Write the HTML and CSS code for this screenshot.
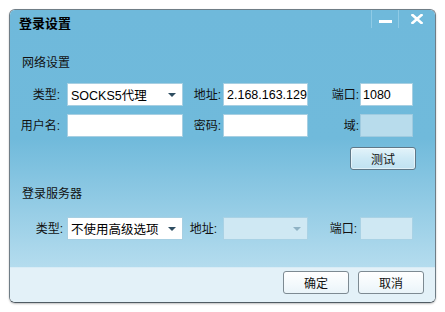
FILE: index.html
```html
<!DOCTYPE html>
<html>
<head>
<meta charset="utf-8">
<link rel="stylesheet" href="styles.css">
</head>
<body>
<div class="window">
  <div class="main">
    <div class="titlebar">
      <div class="title">登录设置</div>
      <div class="ctrls">
        <div class="ctrl min"><span class="dash"></span></div>
        <div class="ctrl close">
          <svg width="12" height="10" viewBox="0 0 12 10"><path d="M1.5 1 L10.5 9 M10.5 1 L1.5 9" stroke="#fff" stroke-width="2.6" stroke-linecap="square"/></svg>
        </div>
      </div>
    </div>

    <div class="section">网络设置</div>
    <div class="grid">
      <div class="lbl l1">类型:</div>
      <div class="field select"><span class="val">SOCKS5代理</span><span class="arrow"></span></div>
      <div class="lbl l2">地址:</div>
      <div class="field"><span class="val">2.168.163.129</span></div>
      <div class="lbl l3">端口:</div>
      <div class="field"><span class="val v2">1080</span></div>

      <div class="lbl l1">用户名:</div>
      <div class="field"></div>
      <div class="lbl l2">密码:</div>
      <div class="field"></div>
      <div class="lbl l3">域:</div>
      <div class="field disabled"></div>
    </div>

    <div class="testrow"><div class="btn test">测试</div></div>

    <div class="section s2">登录服务器</div>
    <div class="grid g2">
      <div class="lbl l1">类型:</div>
      <div class="field select"><span class="val">不使用高级选项</span><span class="arrow"></span></div>
      <div class="lbl l2">地址:</div>
      <div class="field select disabled2"><span class="val"></span><span class="arrow light"></span></div>
      <div class="lbl l3">端口:</div>
      <div class="field disabled2"></div>
    </div>
  </div>
  <div class="footer">
    <div class="btn fbtn">确定</div>
    <div class="btn fbtn">取消</div>
  </div>
</div>
</body>
</html>
```
FILE: styles.css
```css
html, body {
  margin: 0;
  padding: 0;
  background: #ffffff;
}
body {
  width: 445px;
  height: 312px;
  overflow: hidden;
  font-family: "Liberation Sans", "Noto Sans CJK SC", sans-serif;
  font-size: 12px;
  color: #111;
}
.window {
  margin: 9px 0 0 9px;
  width: 425px;
  height: 292px;
  border: 1px solid #6f7d86;
  border-bottom-color: #505b63;
  border-radius: 6px;
  overflow: hidden;
  display: flex;
  flex-direction: column;
  box-shadow: 0 1px 2px rgba(0,0,0,0.25);
}
.main {
  flex: 1;
  background: linear-gradient(to bottom, #6fb9db 0%, #70badb 50%, #b4dcee 100%);
  display: flex;
  flex-direction: column;
}
.titlebar {
  height: 28px;
  display: flex;
  justify-content: space-between;
  align-items: flex-start;
}
.title {
  padding: 5px 0 0 9px;
  line-height: 18px;
  font-size: 13px;
  font-weight: bold;
  color: #000;
}
.ctrls {
  display: flex;
  height: 18px;
}
.ctrl {
  height: 18px;
  display: flex;
  align-items: center;
  justify-content: center;
  border-left: 1px solid #8fcbe6;
}
.min {
  width: 26px;
}
.close {
  width: 36px;
  align-items: flex-start;
  padding-top: 4px;
  height: 14px;
}
.dash {
  width: 13px;
  height: 3px;
  background: #fff;
  margin-top: 4px;
}
.section {
  margin-top: 17px;
  padding-left: 12px;
  line-height: 16px;
  font-size: 12px;
  color: #111;
}
.s2 {
  margin-top: 16px;
}
.grid {
  margin-top: 12px;
  display: grid;
  grid-template-columns: 57px 116px 40px 85px 52px 53px;
  grid-auto-rows: 23px;
  row-gap: 8px;
  align-items: center;
}
.g2 {
  margin-top: 15px;
}
.lbl {
  text-align: right;
  white-space: nowrap;
  line-height: 16px;
}
.l1 { padding-right: 7px; }
.l2 { padding-right: 2px; }
.l3 { padding-right: 1px; }
.g2 .l1 { padding-right: 4px; }
.g2 .l2 { padding-right: 6px; }
.g2 .l3 { padding-right: 3px; }
.field {
  height: 21px;
  background: #ffffff;
  border: 1px solid #a7cfe2;
  display: flex;
  align-items: center;
  overflow: hidden;
  position: relative;
}
.val {
  padding-left: 3px;
  white-space: nowrap;
  font-size: 12.5px;
  color: #000;
}
.v2 { padding-left: 2px; }
.select .val { flex: 1; }
.arrow {
  width: 0;
  height: 0;
  border-left: 4px solid transparent;
  border-right: 4px solid transparent;
  border-top: 4px solid #2e4d61;
  margin-right: 6px;
}
.arrow.light {
  border-top-color: #8fb2c4;
}
.disabled {
  background: #b8dcec;
  border-color: #9fcbe0;
}
.disabled2 {
  background: #cfe8f3;
  border-color: #a9d2e5;
}
.testrow {
  margin-top: 10px;
  display: flex;
  justify-content: flex-end;
  padding-right: 19px;
}
.btn {
  width: 64px;
  height: 21px;
  border-radius: 3px;
  display: flex;
  align-items: center;
  justify-content: center;
  font-size: 12px;
  color: #111;
}
.test {
  border: 1px solid #5f7888;
  background: linear-gradient(to bottom, #e3f3fa 0%, #cde9f5 50%, #c0e2f1 100%);
  box-shadow: inset 0 0 0 1px rgba(255,255,255,0.5);
}
.footer {
  height: 35px;
  background: #e3f1f8;
  border-top: 1px solid #d8ecf6;
  box-sizing: border-box;
  display: flex;
  justify-content: flex-end;
  align-items: flex-start;
  padding: 3px 11px 0 0;
  gap: 9px;
}
.fbtn {
  border: 1px solid #7d8a92;
  background: linear-gradient(to bottom, #ffffff 0%, #f3f9fc 60%, #eaf4f9 100%);
}
```
